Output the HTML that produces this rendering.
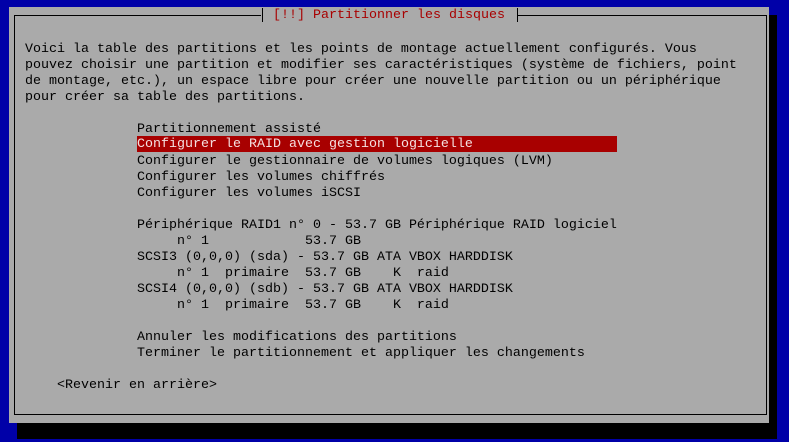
<!DOCTYPE html>
<html><head><meta charset="utf-8"><style>
body{margin:0;width:789px;height:442px;background:#0000a8;position:relative;overflow:hidden;font-family:"Liberation Mono",monospace;font-size:13.33px;}
.sh{position:absolute;left:17px;top:15px;width:760px;height:424px;background:#000;}
.dlg{position:absolute;left:9px;top:7px;width:760px;height:416px;background:#aaa;}
.box{position:absolute;left:14px;top:15px;width:751px;height:398px;border:1px solid #000;}
.t{position:absolute;white-space:pre;line-height:16px;height:16px;color:#000;margin-top:2px;}
.title{position:absolute;left:261px;top:7px;width:257px;height:16px;background:#aaa;}
.tee{position:absolute;top:8px;width:1px;height:14px;background:#000;}
.hl{background:#a80000;color:#f4e0e0;width:480px;margin-top:0;padding-top:1px;height:15px;line-height:16px;}
</style></head><body>
<div class="sh"></div><div class="dlg"></div><div class="box"></div>
<div class="title"></div>
<div class="tee" style="left:262px"></div><div class="tee" style="left:517px"></div>
<div class="t" style="left:273px;top:6px;color:#a80000">[!!] Partitionner les disques</div>
<div class="t" style="left:25px;top:40px">Voici la table des partitions et les points de montage actuellement configurés. Vous</div>
<div class="t" style="left:25px;top:56px">pouvez choisir une partition et modifier ses caractéristiques (système de fichiers, point</div>
<div class="t" style="left:25px;top:72px">de montage, etc.), un espace libre pour créer une nouvelle partition ou un périphérique</div>
<div class="t" style="left:25px;top:88px">pour créer sa table des partitions.</div>
<div class="t" style="left:137px;top:120px">Partitionnement assisté</div>
<div class="t hl" style="left:137px;top:136px">Configurer le RAID avec gestion logicielle</div>
<div class="t" style="left:137px;top:152px">Configurer le gestionnaire de volumes logiques (LVM)</div>
<div class="t" style="left:137px;top:168px">Configurer les volumes chiffrés</div>
<div class="t" style="left:137px;top:184px">Configurer les volumes iSCSI</div>
<div class="t" style="left:137px;top:216px">Périphérique RAID1 n° 0 - 53.7 GB Périphérique RAID logiciel</div>
<div class="t" style="left:137px;top:232px">     n° 1            53.7 GB</div>
<div class="t" style="left:137px;top:248px">SCSI3 (0,0,0) (sda) - 53.7 GB ATA VBOX HARDDISK</div>
<div class="t" style="left:137px;top:264px">     n° 1  primaire  53.7 GB    K  raid</div>
<div class="t" style="left:137px;top:280px">SCSI4 (0,0,0) (sdb) - 53.7 GB ATA VBOX HARDDISK</div>
<div class="t" style="left:137px;top:296px">     n° 1  primaire  53.7 GB    K  raid</div>
<div class="t" style="left:137px;top:328px">Annuler les modifications des partitions</div>
<div class="t" style="left:137px;top:344px">Terminer le partitionnement et appliquer les changements</div>
<div class="t" style="left:57px;top:376px">&lt;Revenir en arrière&gt;</div>
</body></html>
